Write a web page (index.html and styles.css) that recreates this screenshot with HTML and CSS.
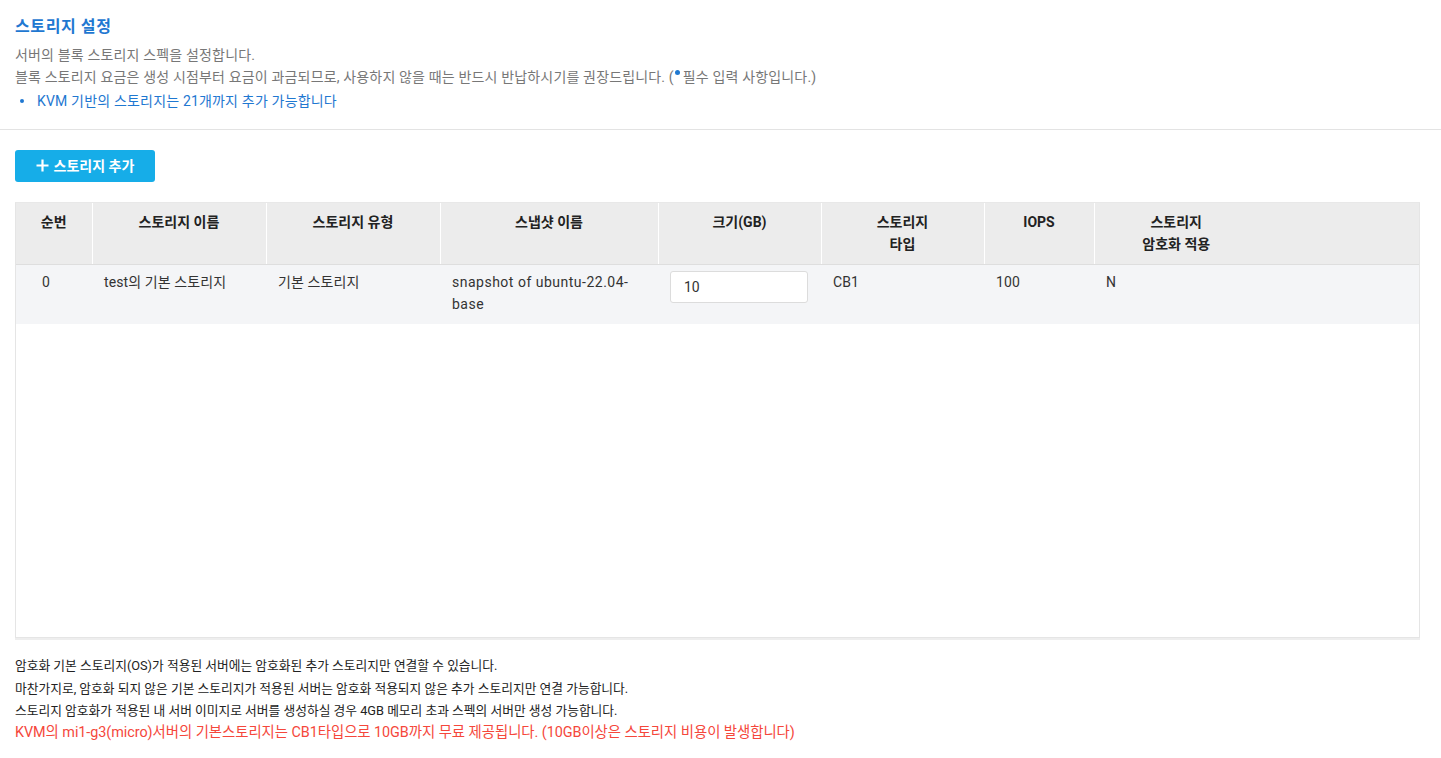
FILE: index.html
```html
<!DOCTYPE html>
<html lang="ko">
<head>
<meta charset="utf-8">
<title>스토리지 설정</title>
<link rel="stylesheet" href="styles.css">
</head>
<body>
<section class="intro">
  <h2 class="title">스토리지 설정</h2>
  <p class="desc">서버의 블록 스토리지 스펙을 설정합니다.</p>
  <p class="desc">블록 스토리지 요금은 생성 시점부터 요금이 과금되므로, 사용하지 않을 때는 반드시 반납하시기를 권장드립니다. (<span class="req-dot"></span>필수 입력 사항입니다.)</p>
  <ul class="notice">
    <li>KVM 기반의 스토리지는 21개까지 추가 가능합니다</li>
  </ul>
</section>
<section class="content">
  <button class="add-btn" type="button">
    <svg class="plus" width="13" height="13" viewBox="0 0 13 13"><path d="M6.5 0.5v12M0.5 6.5h12" stroke="#fff" stroke-width="2.2" fill="none"/></svg>
    <span>스토리지 추가</span>
  </button>
  <div class="table-wrap">
    <table class="grid">
      <colgroup>
        <col class="c1"><col class="c2"><col class="c3"><col class="c4"><col class="c5"><col class="c6"><col class="c7"><col class="c8"><col class="c9">
      </colgroup>
      <thead>
        <tr>
          <th>순번</th>
          <th>스토리지 이름</th>
          <th>스토리지 유형</th>
          <th>스냅샷 이름</th>
          <th>크기(GB)</th>
          <th>스토리지<br>타입</th>
          <th>IOPS</th>
          <th>스토리지<br>암호화 적용</th>
          <th class="blank"></th>
        </tr>
      </thead>
      <tbody>
        <tr>
          <td class="num">0</td>
          <td>test의 기본 스토리지</td>
          <td>기본 스토리지</td>
          <td class="snap">snapshot of ubuntu-22.04-base</td>
          <td><input class="size-input" type="text" value="10"></td>
          <td>CB1</td>
          <td>100</td>
          <td>N</td>
          <td></td>
        </tr>
      </tbody>
    </table>
  </div>
  <div class="notes">
    <p>암호화 기본 스토리지(OS)가 적용된 서버에는 암호화된 추가 스토리지만 연결할 수 있습니다.</p>
    <p>마찬가지로, 암호화 되지 않은 기본 스토리지가 적용된 서버는 암호화 적용되지 않은 추가 스토리지만 연결 가능합니다.</p>
    <p>스토리지 암호화가 적용된 내 서버 이미지로 서버를 생성하실 경우 4GB 메모리 초과 스펙의 서버만 생성 가능합니다.</p>
    <p class="warn">KVM의 mi1-g3(micro)서버의 기본스토리지는 CB1타입으로 10GB까지 무료 제공됩니다. (10GB이상은 스토리지 비용이 발생합니다)</p>
  </div>
</section>
</body>
</html>
```

FILE: styles.css
```css
* { box-sizing: border-box; }
html, body { margin: 0; padding: 0; background: #fff; }
body {
  font-family: Roboto, "Noto Sans CJK KR", "Noto Sans", sans-serif;
  color: #222;
  font-size: 14px;
}
.intro {
  padding: 16px 15px 17px;
  border-bottom: 1px solid #e3e3e3;
}
.title {
  margin: 0 0 6px;
  font-size: 16px;
  line-height: 22px;
  font-weight: 700;
  letter-spacing: 0.6px;
  color: #1f78d1;
}
.desc {
  margin: 0;
  font-size: 14px;
  line-height: 22px;
  letter-spacing: 0.16px;
  color: #777;
}
.req-dot {
  display: inline-block;
  width: 5px;
  height: 5px;
  border-radius: 50%;
  background: #1f78d1;
  vertical-align: 7px;
  margin: 0 3px 0 1px;
}
.notice {
  margin: 2px 0 0;
  padding: 0;
  list-style: none;
}
.notice li {
  position: relative;
  padding-left: 22px;
  font-size: 14px;
  line-height: 22px;
  letter-spacing: 0.18px;
  color: #1f78d1;
}
.notice li::before {
  content: "";
  position: absolute;
  left: 5px;
  top: 9px;
  width: 4px;
  height: 4px;
  border-radius: 50%;
  background: #1f78d1;
}
.content {
  padding: 20px 21px 0 15px;
}
.add-btn {
  display: flex;
  align-items: center;
  justify-content: center;
  gap: 5px;
  width: 140px;
  height: 32px;
  border: 0;
  border-radius: 3px;
  background: #16ade8;
  color: #fff;
  font-family: Roboto, "Noto Sans CJK KR", sans-serif;
  font-size: 14px;
  font-weight: 700;
  padding: 0 0 2px;
  cursor: pointer;
}
.plus { display: block; margin-top: 1px; }
.table-wrap {
  margin-top: 20px;
  height: 436px;
  border: 1px solid #e5e5e5;
  border-top-color: #e8e8e8;
  box-shadow: 0 2px 0 #eeeeee;
  background: #fff;
}
.grid {
  width: 100%;
  border-collapse: collapse;
  table-layout: fixed;
}
.c1 { width: 76px; }
.c2 { width: 174px; }
.c3 { width: 174px; }
.c4 { width: 218px; }
.c5 { width: 163px; }
.c6 { width: 163px; }
.c7 { width: 110px; }
.c8 { width: 164px; }
.grid th {
  background: #ececec;
  height: 61px;
  padding: 8px 6px 0;
  vertical-align: top;
  text-align: center;
  font-size: 14px;
  line-height: 22px;
  font-weight: 700;
  color: #222;
  border-left: 1px solid #fff;
  border-bottom: 1px solid #dedede;
}
.grid th:first-child { border-left: 0; }
.grid th.blank { border-left: 0; }
.grid td {
  background: #f4f5f7;
  height: 60px;
  padding: 6px 12px 0;
  vertical-align: top;
  font-size: 14px;
  line-height: 22px;
  letter-spacing: 0.1px;
  color: #333;
}
.grid td.num { padding-left: 26px; }
.grid td.snap { letter-spacing: 0.5px; }
.size-input {
  display: block;
  width: 138px;
  height: 32px;
  border: 1px solid #dcdcdc;
  border-radius: 3px;
  background: #fff;
  padding: 0 13px;
  margin-top: 0;
  font-family: Roboto, "Noto Sans CJK KR", sans-serif;
  font-size: 14px;
  color: #333;
}
.notes {
  margin-top: 17px;
}
.notes p {
  margin: 0;
  font-size: 12.75px;
  line-height: 22.5px;
  color: #222;
}
.notes .warn {
  font-size: 14.4px;
  line-height: 20px;
  letter-spacing: -0.05px;
  color: #f5473b;
}
```
